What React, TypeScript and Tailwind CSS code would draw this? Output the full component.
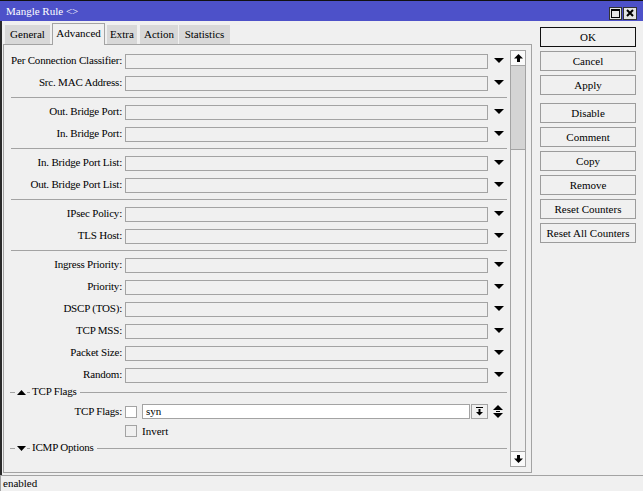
import React from "react";

function DownTri() {
  return (
    <svg width="10" height="6" viewBox="0 0 10 6" className="block">
      <polygon points="0,0 10,0 5,5" fill="#000" />
    </svg>
  );
}

function Row({ label }: { label: string }) {
  return (
    <div className="flex h-[22px] items-center">
      <div className="w-[118px] shrink-0 pb-px text-right leading-none tracking-[-0.2px]">{label}</div>
      <div className="ml-[3px] h-[15px] w-[363px] shrink-0 border border-[#a3a3a3] bg-[#f0f0f0]" />
      <div className="ml-[6px]">
        <DownTri />
      </div>
    </div>
  );
}

function Sep() {
  return (
    <div className="flex h-[7px] items-center">
      <div className="ml-[7px] mr-[3px] h-px flex-1 bg-[#a3a3a3]" />
    </div>
  );
}

function SectionHeader({ title, up }: { title: string; up: boolean }) {
  return (
    <div className="flex h-[12px] items-center">
      <div className="ml-[6px] h-px w-[5px] bg-[#a3a3a3]" />
      <svg width="9" height="5" viewBox="0 0 9 5" className="ml-[2px] block">
        {up ? <polygon points="0,5 9,5 4.5,0" fill="#000" /> : <polygon points="0,0 9,0 4.5,5" fill="#000" />}
      </svg>
      <div className="ml-[1px] h-px w-[3px] bg-[#a3a3a3]" />
      <div className="ml-[2px] pb-px leading-none tracking-[-0.2px]">{title}</div>
      <div className="ml-[3px] mr-[3px] h-px flex-1 bg-[#a3a3a3]" />
    </div>
  );
}

function Btn({ label, def, mt }: { label: string; def?: boolean; mt?: string }) {
  return (
    <div
      className={
        "flex h-[20px] w-[96px] items-center justify-center leading-none bg-[#f0f0f0] border " +
        (def ? "border-[#111]" : "border-[#9c9c9c]") +
        " " +
        (mt || "")
      }
    >
      {label}
    </div>
  );
}

const groups = [
  ["Per Connection Classifier:", "Src. MAC Address:"],
  ["Out. Bridge Port:", "In. Bridge Port:"],
  ["In. Bridge Port List:", "Out. Bridge Port List:"],
  ["IPsec Policy:", "TLS Host:"],
  ["Ingress Priority:", "Priority:", "DSCP (TOS):", "TCP MSS:", "Packet Size:", "Random:"],
];

export default function App() {
  return (
    <div className="flex h-[491px] w-[643px] flex-col overflow-hidden bg-[#f0f0f0] font-['Liberation_Serif','Times_New_Roman',serif] text-[11px] font-normal text-black">
      {/* title bar */}
      <div className="flex h-[21px] shrink-0 items-center border-t border-[#111] bg-[#4d51c9]">
        <div className="ml-[6px] flex-1 leading-none text-white">Mangle Rule &lt;&gt;</div>
        <div className="mr-[6px] mt-[4px] flex">
          <div className="flex h-[13px] w-[13px] items-center justify-center border border-[#333] bg-[#e4e4e4]">
            <div className="h-[9px] w-[9px] border border-t-2 border-black" />
          </div>
          <div className="ml-px flex h-[13px] w-[14px] items-center justify-center border border-[#333] bg-[#e4e4e4]">
            <svg width="8" height="8" viewBox="0 0 8 8" className="block">
              <path d="M1 1 L7 7 M7 1 L1 7" stroke="#000" strokeWidth="2" />
            </svg>
          </div>
        </div>
      </div>

      {/* body */}
      <div className="flex h-[454px] shrink-0 border-l-2 border-[#2a2a2a]">
        {/* left */}
        <div className="ml-px flex w-[529px] shrink-0 flex-col">
          {/* tabs */}
          <div className="relative z-10 mt-[2px] flex h-[21px] items-end">
            <div className="ml-[2px] flex h-[19px] w-[45px] items-center justify-center bg-[#d8d8d8] leading-none">General</div>
            <div className="-mb-px ml-[2px] flex h-[22px] w-[53px] items-center justify-center border border-b-0 border-[#a3a3a3] bg-[#f0f0f0] pb-[2px] leading-none">
              Advanced
            </div>
            <div className="ml-[2px] flex h-[19px] w-[30px] items-center justify-center bg-[#d8d8d8] leading-none">Extra</div>
            <div className="ml-[3px] flex h-[19px] w-[38px] items-center justify-center bg-[#d8d8d8] leading-none">Action</div>
            <div className="ml-[1px] flex h-[19px] w-[51px] items-center justify-center bg-[#d8d8d8] leading-none">Statistics</div>
          </div>
          {/* panel */}
          <div className="flex h-[429px] border border-[#a3a3a3]">
            <div className="h-full w-[506px] shrink-0 overflow-hidden pt-[5px]">
              {groups.map((g, gi) => (
                <React.Fragment key={gi}>
                  {gi > 0 && <Sep />}
                  {g.map((l) => (
                    <Row key={l} label={l} />
                  ))}
                </React.Fragment>
              ))}
              <SectionHeader title="TCP Flags" up />
              <div className="mt-[6px] flex h-[15px] items-center">
                <div className="w-[118px] shrink-0 pb-px text-right leading-none tracking-[-0.2px]">TCP Flags:</div>
                <div className="ml-[3px] h-[12px] w-[12px] shrink-0 border border-[#a3a3a3] bg-white" />
                <div className="ml-[5px] flex h-[15px] w-[328px] shrink-0 items-center border border-[#a3a3a3] bg-white pl-[3px] leading-none">
                  syn
                </div>
                <div className="ml-px flex h-[15px] w-[17px] shrink-0 items-center justify-center border border-[#a3a3a3] bg-[#f0f0f0]">
                  <svg width="9" height="9" viewBox="0 0 9 9" className="block">
                    <rect x="1" y="0" width="7" height="1" fill="#000" />
                    <rect x="3.5" y="2" width="2" height="3" fill="#000" />
                    <polygon points="1,5 8,5 4.5,8.5" fill="#000" />
                  </svg>
                </div>
                <svg width="10" height="13" viewBox="0 0 10 13" className="ml-[5px] block">
                  <polygon points="0,5 10,5 5,0" fill="#000" />
                  <rect x="3" y="6" width="4" height="1" fill="#000" />
                  <polygon points="0,8 10,8 5,13" fill="#000" />
                </svg>
              </div>
              <div className="mt-[6px] flex h-[12px] items-center">
                <div className="ml-[121px] h-[12px] w-[12px] shrink-0 border border-[#a3a3a3] bg-[#f0f0f0]" />
                <div className="ml-[5px] leading-none">Invert</div>
              </div>
              <div className="mt-[5px]">
                <SectionHeader title="ICMP Options" up={false} />
              </div>
            </div>
            {/* scrollbar */}
            <div className="mt-[5px] flex h-[417px] w-[16px] shrink-0 flex-col border border-[#a3a3a3] bg-[#f0f0f0]">
              <div className="flex h-[15px] shrink-0 items-center justify-center border-b border-[#a3a3a3] bg-[#fafafa]">
                <svg width="9" height="8" viewBox="0 0 9 8" className="block">
                  <polygon points="0,4.5 9,4.5 4.5,0" fill="#000" />
                  <rect x="3" y="4" width="3" height="4" fill="#000" />
                </svg>
              </div>
              <div className="h-[84px] shrink-0 border-b border-[#a3a3a3] bg-[#d4d4d4]" />
              <div className="flex-1" />
              <div className="flex h-[15px] shrink-0 items-center justify-center border-t border-[#a3a3a3] bg-[#fafafa]">
                <svg width="9" height="8" viewBox="0 0 9 8" className="block">
                  <rect x="3" y="0" width="3" height="4" fill="#000" />
                  <polygon points="0,3.5 9,3.5 4.5,8" fill="#000" />
                </svg>
              </div>
            </div>
          </div>
        </div>
        {/* right buttons */}
        <div className="ml-[8px] mt-[6px] flex flex-col">
          <Btn label="OK" def />
          <Btn label="Cancel" mt="mt-[4px]" />
          <Btn label="Apply" mt="mt-[4px]" />
          <Btn label="Disable" mt="mt-[8px]" />
          <Btn label="Comment" mt="mt-[4px]" />
          <Btn label="Copy" mt="mt-[4px]" />
          <Btn label="Remove" mt="mt-[4px]" />
          <Btn label="Reset Counters" mt="mt-[4px]" />
          <Btn label="Reset All Counters" mt="mt-[4px]" />
        </div>
      </div>

      {/* status */}
      <div className="flex h-[16px] shrink-0 items-center border-l border-t border-[#a3a3a3] pl-[2px] leading-none">enabled</div>
    </div>
  );
}
